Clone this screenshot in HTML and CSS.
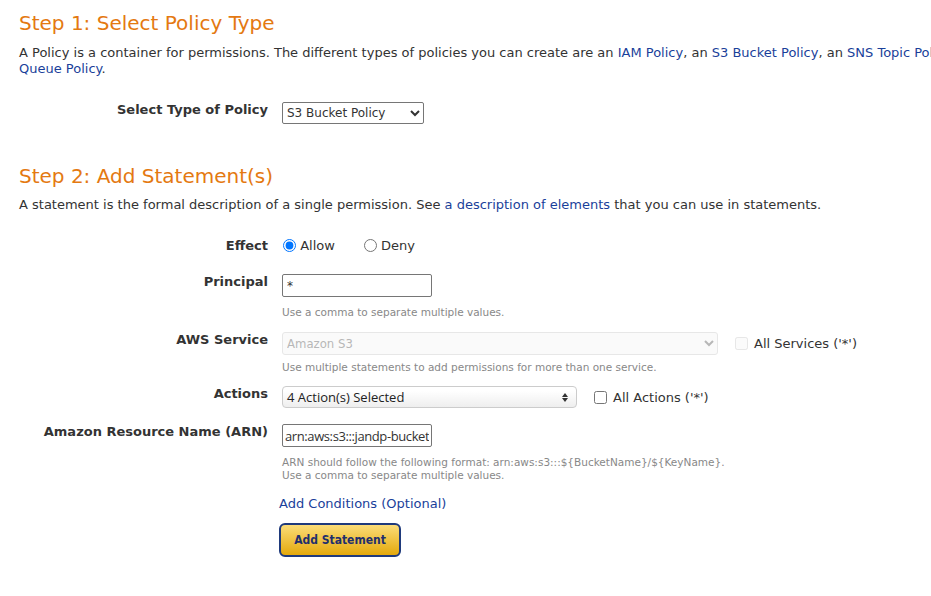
FILE: index.html
```html
<!DOCTYPE html>
<html lang="en">
<head>
  <meta charset="UTF-8">
  <title>AWS Policy Generator</title>
  <link rel="stylesheet" href="styles.css">
</head>
<body>
  <div class="page">
    <h2 class="step">Step 1: Select Policy Type</h2>
    <p class="intro">
      A Policy is a container for permissions. The different types of policies you can create are an
      <a href="#">IAM Policy</a>, an <a href="#">S3 Bucket Policy</a>, an <a href="#">SNS Topic Policy</a>,
      a <a href="#">VPC Endpoint Policy</a>, and an <a href="#">SQS Queue Policy</a>.
    </p>

    <div class="row row-type">
      <label class="row-label">Select Type of Policy</label>
      <div class="row-field">
        <select class="policy-type">
          <option>S3 Bucket Policy</option>
        </select>
      </div>
    </div>

    <h2 class="step step-2">Step 2: Add Statement(s)</h2>
    <p class="intro">
      A statement is the formal description of a single permission. See
      <a href="#">a description of elements</a> that you can use in statements.
    </p>

    <div class="row row-effect">
      <label class="row-label">Effect</label>
      <div class="row-field radios">
        <label class="radio"><input type="radio" name="effect" checked> Allow</label>
        <label class="radio"><input type="radio" name="effect"> Deny</label>
      </div>
    </div>

    <div class="row row-principal">
      <label class="row-label">Principal</label>
      <div class="row-field">
        <input class="text-input" type="text" value="*">
        <div class="hint">Use a comma to separate multiple values.</div>
      </div>
    </div>

    <div class="row row-service">
      <label class="row-label">AWS Service</label>
      <div class="row-field">
        <div class="line">
          <select class="service" disabled>
            <option>Amazon S3</option>
          </select>
          <label class="check check-off"><input type="checkbox" disabled> All Services ('*')</label>
        </div>
        <div class="hint hint-tight">Use multiple statements to add permissions for more than one service.</div>
      </div>
    </div>

    <div class="row row-actions">
      <label class="row-label">Actions</label>
      <div class="row-field">
        <div class="line">
          <span class="actions-box">4 Action(s) Selected</span>
          <label class="check"><input type="checkbox"> All Actions ('*')</label>
        </div>
      </div>
    </div>

    <div class="row row-arn">
      <label class="row-label">Amazon Resource Name (ARN)</label>
      <div class="row-field">
        <input class="text-input arn" type="text" value="arn:aws:s3:::jandp-bucket">
        <div class="hint">ARN should follow the following format: arn:aws:s3:::${BucketName}/${KeyName}.<br>
          Use a comma to separate multiple values.</div>
      </div>
    </div>

    <div class="row">
      <span></span>
      <div class="row-field">
        <a class="conditions" href="#">Add Conditions (Optional)</a>
        <div>
          <button class="add-btn">Add Statement</button>
        </div>
      </div>
    </div>
  </div>
</body>
</html>
```

FILE: styles.css
```css
html, body {
  overflow: hidden;
}
body {
  margin: 0;
  font-family: "DejaVu Sans", sans-serif;
  font-size: 13px;
  color: #333;
  background: #fff;
}
a {
  color: #1a3f9a;
  text-decoration: none;
}
.page {
  width: 1190px;
  padding: 0 19px;
}
.step {
  font-weight: normal;
  font-size: 20px;
  color: #e47911;
  margin: 10px 0 0;
  line-height: 26px;
}
.step-2 {
  margin-top: 39px;
}
.intro {
  margin: 9px 0 0;
  line-height: 16px;
}
.step-2 + .intro {
  margin-top: 8px;
}
.row {
  display: grid;
  grid-template-columns: 249px 1fr;
  column-gap: 14px;
  margin-top: 14px;
}
.row-label {
  font-weight: bold;
  text-align: right;
  line-height: 16px;
}
.row-type {
  margin-top: 25px;
}
.row-effect {
  margin-top: 23px;
}
.row-effect .row-label {
  padding-top: 2px;
}
.row-principal {
  margin-top: 18px;
}
.row-service {
  margin-top: 13px;
}
.row-actions {
  margin-top: 12px;
}
.row-arn {
  margin-top: 16px;
}
.policy-type {
  width: 142px;
  height: 22px;
  font-family: "DejaVu Sans", sans-serif;
  font-size: 12px;
  color: #333;
  border: 1px solid #767676;
  border-radius: 2px;
  background: #fff;
}
.radios {
  display: flex;
  gap: 28px;
  line-height: 20px;
}
.radio input {
  margin: 0 0 0 1px;
  vertical-align: -2px;
}
.text-input {
  width: 150px;
  height: 23px;
  box-sizing: border-box;
  border: 1px solid #767676;
  border-radius: 2px;
  padding: 0 4px;
  font-family: "DejaVu Sans", sans-serif;
  font-size: 12px;
  color: #333;
}
.arn {
  font-family: "Open Sans", sans-serif;
  font-size: 13px;
  padding: 0 2px;
  letter-spacing: -0.4px;
}
.hint {
  font-family: "DejaVu Sans", sans-serif;
  font-size: 10.5px;
  color: #888;
  line-height: 13px;
  margin-top: 9px;
}
.hint-tight {
  margin-top: 6px;
}
.line {
  display: flex;
  align-items: center;
}
.service {
  width: 436px;
  height: 23px;
  font-family: "DejaVu Sans Condensed", sans-serif;
  font-size: 13px;
  color: #999;
  background: #f9f9f9;
  border: 1px solid #ddd;
  border-radius: 3px;
}
.check {
  margin-left: 17px;
  display: flex;
  align-items: center;
}
.check input {
  margin: 0 6px 0 0;
  width: 13px;
  height: 13px;
}
.check-off input {
  opacity: 0.5;
}
.actions-box {
  position: relative;
  display: block;
  width: 295px;
  height: 22px;
  box-sizing: border-box;
  border: 1px solid #ccc;
  border-radius: 4px;
  background: linear-gradient(#fff 20%, #eee 100%);
  font-family: "Open Sans", sans-serif;
  font-size: 13px;
  line-height: 20px;
  padding-left: 4px;
  color: #222;
}
.actions-box::before,
.actions-box::after {
  content: "";
  position: absolute;
  right: 8px;
  border-left: 3px solid transparent;
  border-right: 3px solid transparent;
}
.actions-box::before {
  top: 6px;
  border-bottom: 4px solid #333;
}
.actions-box::after {
  top: 11px;
  border-top: 4px solid #333;
}
.conditions {
  display: inline-block;
  margin: 0 0 0 -3px;
  line-height: 16px;
}
.add-btn {
  margin: 11px 0 0 -3px;
  width: 122px;
  height: 34px;
  border: 2px solid #1f3a7c;
  border-radius: 6px;
  background: linear-gradient(#fbdc78, #e4a90c);
  color: #1f2f6d;
  font-family: "DejaVu Sans Condensed", sans-serif;
  font-weight: bold;
  font-size: 12px;
  cursor: pointer;
}
```
